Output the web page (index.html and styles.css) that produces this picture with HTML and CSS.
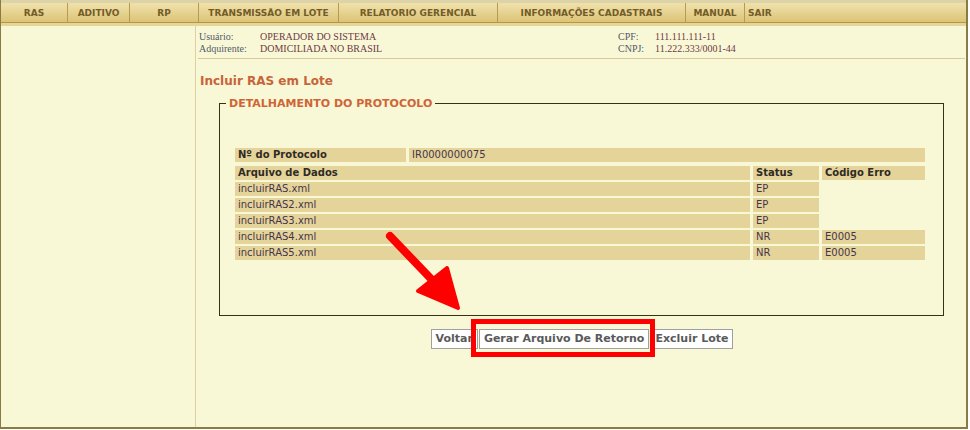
FILE: index.html
```html
<!DOCTYPE html>
<html lang="pt-BR">
<head>
<meta charset="utf-8">
<title>Incluir RAS em Lote</title>
<link rel="stylesheet" href="styles.css">
</head>
<body>
<div class="page">
  <nav class="menu">
    <a class="mi mi-ras">RAS</a>
    <a class="mi mi-aditivo">ADITIVO</a>
    <a class="mi mi-rp">RP</a>
    <a class="mi mi-trans">TRANSMISSÃO EM LOTE</a>
    <a class="mi mi-rel">RELATORIO GERENCIAL</a>
    <a class="mi mi-info">INFORMAÇÕES CADASTRAIS</a>
    <a class="mi mi-manual">MANUAL</a>
    <a class="mi mi-sair">SAIR</a>
  </nav>
  <div class="band"></div>
  <div class="main">
    <aside class="sidebar"></aside>
    <section class="content">
      <div class="userinfo">
        <span class="lbl">Usuário:</span><span class="val">OPERADOR DO SISTEMA</span>
        <span class="lbl">CPF:</span><span class="val">111.111.111-11</span>
        <span class="lbl">Adquirente:</span><span class="val">DOMICILIADA NO BRASIL</span>
        <span class="lbl">CNPJ:</span><span class="val">11.222.333/0001-44</span>
      </div>
      <h1 class="title">Incluir RAS em Lote</h1>
      <fieldset class="box">
        <legend class="legend">DETALHAMENTO DO PROTOCOLO</legend>
        <div class="proto">
          <div class="cell th">Nº do Protocolo</div>
          <div class="cell">IR0000000075</div>
        </div>
        <div class="files">
          <div class="cell th">Arquivo de Dados</div>
          <div class="cell th">Status</div>
          <div class="cell th">Código Erro</div>

          <div class="cell">incluirRAS.xml</div>
          <div class="cell">EP</div>
          <div class="empty"></div>

          <div class="cell">incluirRAS2.xml</div>
          <div class="cell">EP</div>
          <div class="empty"></div>

          <div class="cell">incluirRAS3.xml</div>
          <div class="cell">EP</div>
          <div class="empty"></div>

          <div class="cell">incluirRAS4.xml</div>
          <div class="cell">NR</div>
          <div class="cell">E0005</div>

          <div class="cell">incluirRAS5.xml</div>
          <div class="cell">NR</div>
          <div class="cell">E0005</div>
        </div>
      </fieldset>
      <div class="actions">
        <button class="btn" type="button">Voltar</button>
        <button class="btn" type="button">Gerar Arquivo De Retorno</button>
        <button class="btn" type="button">Excluir Lote</button>
      </div>
    </section>
  </div>
  <svg class="annot" width="970" height="430" viewBox="0 0 970 430" aria-hidden="true">
    <line x1="390" y1="236" x2="436" y2="284" stroke="#ff0000" stroke-width="8" stroke-linecap="round"/>
    <polygon points="447,268 418,291 458,308" fill="#ff0000" stroke="#ff0000" stroke-width="4" stroke-linejoin="round"/>
    <rect x="473.5" y="321.5" width="179" height="33" fill="none" stroke="#ff0000" stroke-width="5"/>
  </svg>
</div>
</body>
</html>
```

FILE: styles.css
```css
html, body {
  margin: 0;
  padding: 0;
  background: #ffffff;
}

.page {
  position: relative;
  width: 968px;
  height: 429px;
  box-sizing: border-box;
  border-left: 1px solid #8a7b45;
  border-right: 2px solid #8a7b45;
  border-bottom: 2px solid #8a7b45;
  background: #f9f8d6;
  display: flex;
  flex-direction: column;
  font-family: "DejaVu Sans", Verdana, sans-serif;
  overflow: hidden;
}

.menu {
  display: flex;
  height: 19px;
  border-top: 3px solid #dcd4a8;
  border-bottom: 1px solid #b39843;
  background: linear-gradient(#f0e2ac, #dcc477);
  flex: none;
}

.mi {
  display: flex;
  align-items: center;
  justify-content: center;
  font-size: 9px;
  font-weight: bold;
  color: #735c27;
  border-right: 1px solid #b89b52;
  box-sizing: border-box;
  white-space: nowrap;
}

.mi-ras { width: 67px; }
.mi-aditivo { width: 62px; }
.mi-rp { width: 69px; }
.mi-trans { width: 140px; }
.mi-rel { width: 159px; }
.mi-info { width: 188px; }
.mi-manual { width: 59px; }
.mi-sair { border-right: none; justify-content: flex-start; padding-left: 3px; }

.band {
  height: 3px;
  background: #e4d59b;
  flex: none;
}

.main {
  display: flex;
  flex: 1;
}

.sidebar {
  width: 194px;
  border-right: 1px solid #ddd1a2;
  flex: none;
}

.content {
  flex: 1;
  padding-left: 2px;
}

.userinfo {
  display: grid;
  grid-template-columns: 61px 358px 37px 1fr;
  font-family: "Liberation Serif", "Times New Roman", serif;
  font-size: 10px;
  line-height: 12px;
  padding: 5px 0 3px 1px;
  border-bottom: 1px solid #d9ca9c;
  margin-right: 1px;
}

.lbl { color: #525a6a; }
.val { color: #6e3844; }

.title {
  margin: 14px 0 0 2px;
  font-size: 12px;
  line-height: 16px;
  font-weight: bold;
  color: #c8643a;
}

.box {
  margin: 8px 22px 0 21px;
  padding: 38px 18px 55px 15px;
  border: 1px solid #34340f;
  min-width: 0;
}

.legend {
  margin-left: -9px;
  padding: 0 3px;
  font-size: 11px;
  line-height: 13px;
  font-weight: bold;
  color: #cf6537;
}

.proto {
  display: grid;
  grid-template-columns: 171px 1fr;
  column-gap: 3px;
}

.files {
  display: grid;
  grid-template-columns: 1fr 66px 103px;
  column-gap: 3px;
  row-gap: 2px;
  margin-top: 4px;
}

.cell {
  background: #e5d49a;
  height: 14px;
  line-height: 14px;
  font-size: 10px;
  padding-left: 3px;
  color: #46344a;
  white-space: nowrap;
}

.cell.th {
  font-weight: bold;
  color: #2f2a25;
}

.actions {
  display: flex;
  justify-content: center;
  gap: 1px;
  margin-top: 13px;
}

.btn {
  font-family: "DejaVu Sans", Verdana, sans-serif;
  font-size: 11px;
  font-weight: bold;
  color: #5a5a5a;
  background: #ffffff;
  border: 1px solid #a0a0a0;
  padding: 0 4px;
  height: 20px;
  line-height: 18px;
  margin: 0;
  border-radius: 0;
}

.annot {
  position: absolute;
  left: -1px;
  top: 0;
  pointer-events: none;
}
```
